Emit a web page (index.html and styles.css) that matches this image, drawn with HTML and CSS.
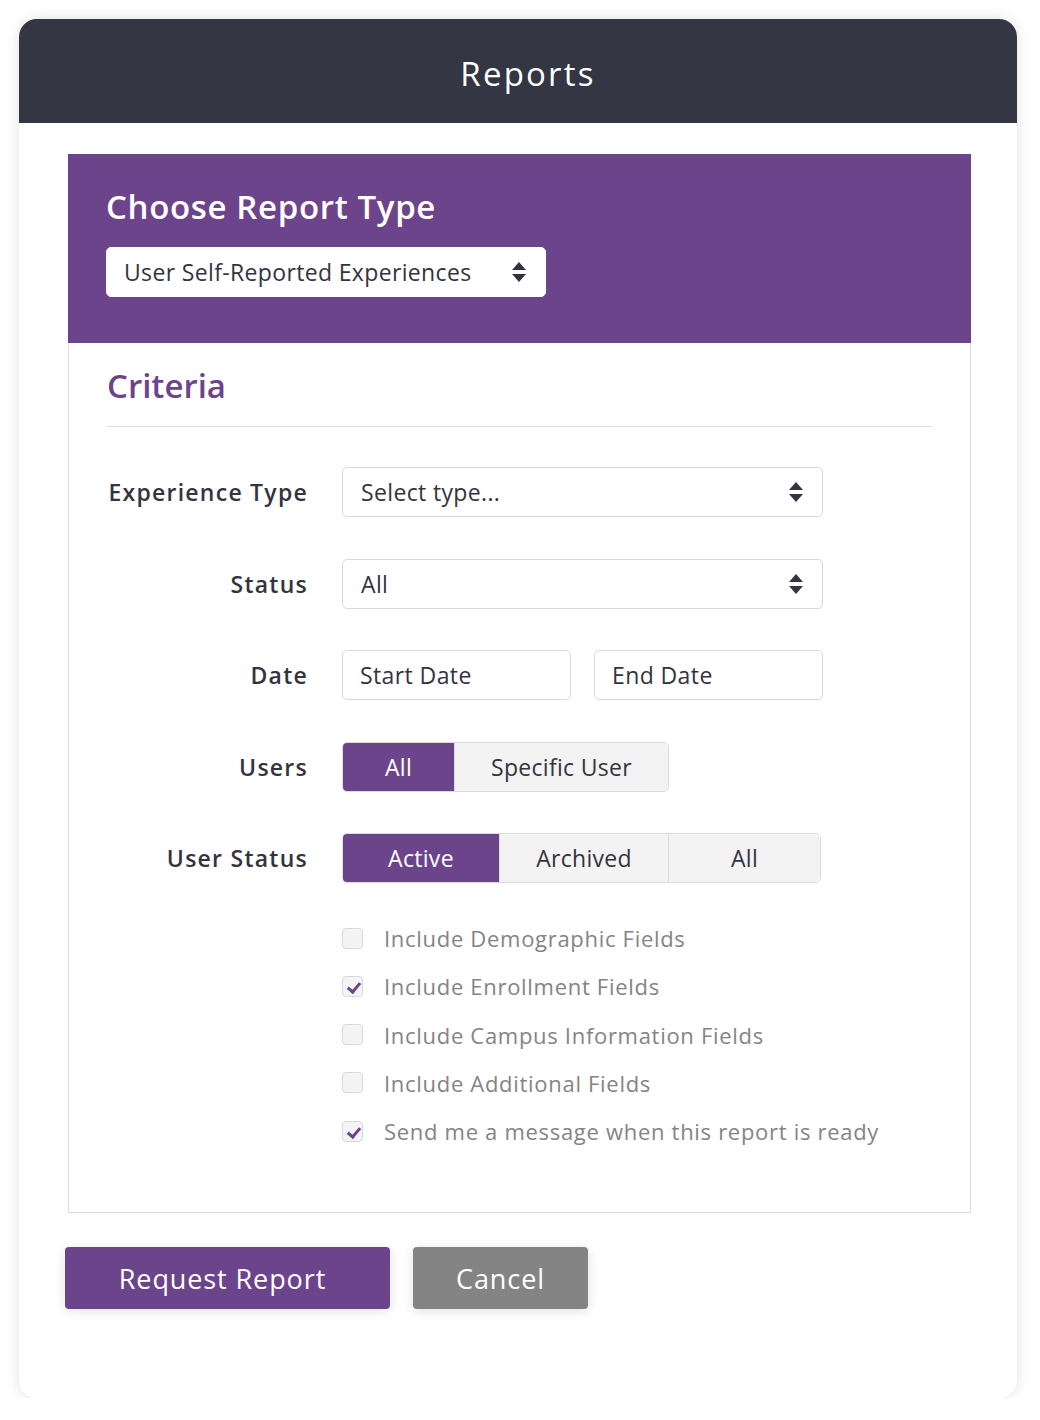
FILE: index.html
```html
<!DOCTYPE html>
<html lang="en">
<head>
  <meta charset="UTF-8" />
  <title>Reports</title>
  <link rel="stylesheet" href="styles.css">
</head>
<body>
  <div class="card">
    <header class="card-header">
      <h1>Reports</h1>
    </header>
    <main class="card-body">
      <div class="panel">
        <section class="report-type">
          <h2>Choose Report Type</h2>
          <div class="select select-type">
            <span>User Self-Reported Experiences</span>
            <span class="arrows"><i class="up"></i><i class="down"></i></span>
          </div>
        </section>

        <section class="criteria">
          <h2>Criteria</h2>
          <hr>

          <div class="row">
            <label>Experience Type</label>
            <div class="select">
              <span>Select type...</span>
              <span class="arrows"><i class="up"></i><i class="down"></i></span>
            </div>
          </div>

          <div class="row">
            <label>Status</label>
            <div class="select">
              <span>All</span>
              <span class="arrows"><i class="up"></i><i class="down"></i></span>
            </div>
          </div>

          <div class="row">
            <label>Date</label>
            <div class="dates">
              <div class="input">Start Date</div>
              <div class="input">End Date</div>
            </div>
          </div>

          <div class="row">
            <label>Users</label>
            <div class="toggle">
              <button class="on w-all">All</button>
              <button class="w-specific">Specific User</button>
            </div>
          </div>

          <div class="row">
            <label>User Status</label>
            <div class="toggle">
              <button class="on w-active">Active</button>
              <button class="w-archived">Archived</button>
              <button class="w-all2">All</button>
            </div>
          </div>

          <ul class="checks">
            <li><span class="box"></span>Include Demographic Fields</li>
            <li><span class="box checked"></span>Include Enrollment Fields</li>
            <li><span class="box"></span>Include Campus Information Fields</li>
            <li><span class="box"></span>Include Additional Fields</li>
            <li><span class="box checked"></span>Send me a message when this report is ready</li>
          </ul>
        </section>
      </div>

      <div class="actions">
        <button class="btn btn-primary">Request Report</button>
        <button class="btn btn-cancel">Cancel</button>
      </div>
    </main>
  </div>
</body>
</html>
```

FILE: styles.css
```css
body {
  margin: 0;
  background: #fff;
  font-family: "Open Sans", Arial, sans-serif;
  color: #33343f;
}
.card {
  width: 998px;
  margin: 19px 0 0 19px;
  border-radius: 18px;
  overflow: hidden;
  background: #fff;
  box-shadow: 0 0 14px rgba(0,0,0,0.12);
}
.card-header {
  background: #353643;
  height: 104px;
  padding-left: 20px;
  display: flex;
  align-items: center;
  justify-content: center;
}
.card-header h1 {
  margin: 4px 0 0;
  color: #fff;
  font-weight: 400;
  font-size: 33px;
  letter-spacing: 2.2px;
}
.card-body {
  padding: 31px 46px 89px 49px;
}
.report-type {
  background: #6c448b;
  padding: 30px 38px 46px;
}
.report-type h2,
.criteria h2 {
  margin: 0;
  font-size: 33px;
  font-weight: 600;
  line-height: 46px;
  letter-spacing: 0.65px;
  color: #fff;
}
.report-type h2 {
  margin-bottom: 17px;
}
.select {
  display: flex;
  align-items: center;
  justify-content: space-between;
  box-sizing: border-box;
  height: 50px;
  width: 481px;
  padding: 0 18px;
  background: #fff;
  border: 1px solid #d9d9d9;
  border-radius: 5px;
  font-size: 23px;
  letter-spacing: 0.35px;
  color: #33343f;
}
.select-type {
  width: 440px;
  padding-left: 17px;
  border-color: #fff;
}
.arrows {
  display: flex;
  flex-direction: column;
  gap: 4px;
  margin-right: 1px;
}
.arrows i {
  width: 0;
  height: 0;
  border-left: 7px solid transparent;
  border-right: 7px solid transparent;
}
.arrows .up {
  border-bottom: 8px solid #33343f;
}
.arrows .down {
  border-top: 8px solid #33343f;
}
.criteria {
  border: 1px solid #dcdcdc;
  border-top: none;
  padding: 20px 38px 57px 38px;
}
.criteria h2 {
  color: #6c448b;
  letter-spacing: 0;
}
.criteria hr {
  border: none;
  border-top: 1px solid #dcdcdc;
  margin: 17px 0 40px;
}
.row {
  display: flex;
  align-items: center;
  gap: 34px;
  margin-bottom: 41.5px;
}
.row label {
  width: 201px;
  flex-shrink: 0;
  text-align: right;
  font-size: 23px;
  font-weight: 600;
  letter-spacing: 1.25px;
  color: #33343f;
}
.dates {
  display: flex;
  gap: 23px;
}
.input {
  box-sizing: border-box;
  width: 229px;
  height: 50px;
  border: 1px solid #d9d9d9;
  border-radius: 5px;
  padding: 0 17px;
  display: flex;
  align-items: center;
  font-size: 23px;
  letter-spacing: 0.4px;
}
.toggle {
  display: flex;
  height: 50px;
  border-radius: 5px;
  overflow: hidden;
  border: 1px solid #dcdcdc;
  box-sizing: border-box;
}
.toggle button {
  font-family: inherit;
  font-size: 23px;
  letter-spacing: 0.3px;
  color: #33343f;
  background: #f3f3f3;
  border: none;
  border-left: 1px solid #dcdcdc;
  padding: 0;
}
.toggle button:first-child {
  border-left: none;
}
.toggle button.on {
  background: #6c448b;
  color: #fff;
}
.w-all { width: 111px; }
.w-specific { width: 214px; }
.w-active { width: 156px; }
.w-archived { width: 169px; }
.w-all2 { width: 152px; }
.checks {
  list-style: none;
  margin: -10.5px 0 0 235px;
  padding: 0;
}
.checks li {
  display: flex;
  align-items: center;
  height: 48.25px;
  font-size: 22px;
  letter-spacing: 0.7px;
  color: #848484;
}
.box {
  position: relative;
  flex-shrink: 0;
  width: 21px;
  height: 21px;
  box-sizing: border-box;
  border: 1px solid #d9d9d9;
  background: #f4f4f4;
  border-radius: 4px;
  margin-right: 21px;
}
.box.checked::after {
  content: "";
  position: absolute;
  left: 7px;
  top: 3px;
  width: 5px;
  height: 10px;
  border: solid #6c448b;
  border-width: 0 3px 3px 0;
  transform: rotate(40deg);
}
.actions {
  display: flex;
  gap: 23px;
  margin: 34px 0 0 -3px;
}
.btn {
  font-family: inherit;
  font-size: 27px;
  font-weight: 500;
  letter-spacing: 0.9px;
  color: #fff;
  height: 62px;
  border: none;
  border-radius: 4px;
  box-shadow: 0 2px 12px rgba(0,0,0,0.12);
}
.btn-primary {
  width: 325px;
  padding-right: 16px;
  background: #6c448b;
}
.btn-cancel {
  width: 175px;
  background: #848484;
}
```
